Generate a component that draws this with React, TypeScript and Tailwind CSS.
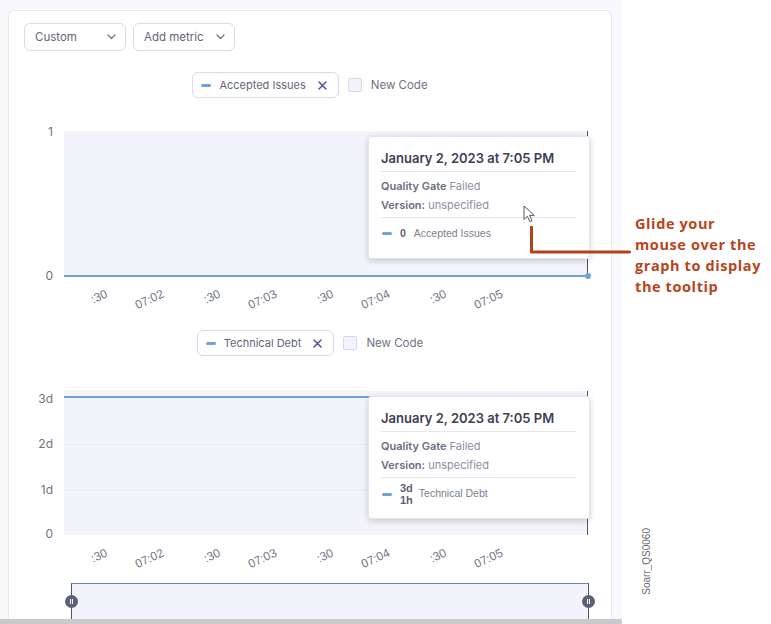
const xTicks = [":30", "07:02", ":30", "07:03", ":30", "07:04", ":30", "07:05"];

const Chevron = () => (
  <svg width="9" height="6" viewBox="0 0 9 6" fill="none">
    <path d="M1 1l3.5 3.5L8 1" stroke="#6b6f82" strokeWidth="1.2" strokeLinecap="round" strokeLinejoin="round" />
  </svg>
);

const Dropdown = ({ label }: { label: string }) => (
  <div className="flex h-[28px] w-[102px] items-center justify-between rounded-md border border-[#d9dbea] bg-white pl-[10px] pr-[9px] text-[11.5px] text-[#62667a]">
    <span className="pt-[2px]">{label}</span>
    <Chevron />
  </div>
);

const Dash = () => <span className="inline-block h-[3px] w-[10px] rounded-full bg-[#6fa2da]" />;

const LegendRow = ({ label }: { label: string }) => (
  <div className="flex h-[26px] items-center justify-center gap-[9px]">
    <div className="flex h-[26px] items-center gap-[8px] rounded-md border border-[#d9dbec] bg-white pl-[8px] pr-[11px] text-[11px] text-[#62667a]">
      <Dash />
      <span className="mr-[4px]">{label}</span>
      <svg width="9" height="9" viewBox="0 0 9 9">
        <path d="M1 1l7 7M8 1L1 8" stroke="#4f53a0" strokeWidth="1.5" strokeLinecap="round" />
      </svg>
    </div>
    <span className="h-[14px] w-[14px] rounded-[2px] border border-[#d5d8ee] bg-[#f2f3fb]" />
    <span className="pt-[2px] text-[11.5px] text-[#6e7284]">New Code</span>
  </div>
);

const Tooltip = ({ children }: { children: React.ReactNode }) => (
  <div className="absolute left-[304px] top-[5px] z-10 h-[123px] w-[222px] rounded-[3px] border border-[#e4e5ec] bg-white px-[12px] pt-[11px] shadow-[0_2px_6px_rgba(0,0,0,0.18)]">
    <div className="mr-px border-b border-[#e6e7ee] pb-[3px] text-[13px] font-semibold leading-[20px] text-[#3d4153]">
      January 2, 2023 at 7:05 PM
    </div>
    <div className="mt-[6px] text-[11px] leading-[16px] text-[#8c90a2]">
      <span className="font-semibold text-[#6a6e82]">Quality Gate</span> Failed
    </div>
    <div className="mt-[3px] border-b border-[#e6e7ee] pb-[4px] text-[11px] leading-[16px] text-[#8c90a2]">
      <span className="font-semibold text-[#6a6e82]">Version:</span> unspecified
    </div>
    {children}
  </div>
);

const XAxis = () => (
  <div className="ml-[41.6px] flex pt-[10px] font-['Liberation_Sans',sans-serif] text-[12px] text-[#72768a]">
    {xTicks.map((t, i) => (
      <div key={i} className="flex h-[14px] w-[56.4px] justify-end leading-[14px]">
        <span className="inline-block origin-right rotate-[-25deg] whitespace-nowrap">{t}</span>
      </div>
    ))}
  </div>
);

const YLabel = ({ top, children }: { top: number; children: string }) => (
  <span className="absolute right-[11px] -translate-y-1/2 text-[12px] leading-[14px] text-[#6f7385]" style={{ top }}>
    {children}
  </span>
);

const App = () => (
  <div className="relative h-[624px] w-[771px] overflow-hidden bg-white font-['Inter',sans-serif]">
    <div className="flex h-[619px] w-[622px] bg-[#f9f9fb] pl-2 pt-[10px]">
      <div className="h-full w-[604px] rounded-t-md border border-b-0 border-[#e8e8f2] bg-white">
        <div className="flex gap-[7px] pl-[15px] pt-3">
          <Dropdown label="Custom" />
          <Dropdown label="Add metric" />
        </div>

        <div className="mt-[21px]">
          <LegendRow label="Accepted Issues" />
        </div>

        {/* Chart 1 */}
        <div className="mt-[33px] flex">
          <div className="relative h-[145px] w-[55px]">
            <YLabel top={1}>1</YLabel>
            <YLabel top={145}>0</YLabel>
          </div>
          <div className="relative h-[145px] w-[524px] bg-[#f3f4fb]">
            <div className="absolute bottom-0 right-0 top-0 w-px bg-[#50566a]" />
            <div className="absolute bottom-[-1px] left-0 right-0 h-[2px] bg-[#6fa3dc]" />
            <div className="absolute bottom-[-3px] right-[-3px] h-[6px] w-[6px] rounded-full bg-[#6fa3dc]" />
            <Tooltip>
              <div className="flex h-[31px] items-center gap-[8px] pl-px font-['Liberation_Sans',sans-serif] text-[10.5px] text-[#7a7e90]">
                <Dash />
                <span className="font-bold text-[#5e6276]">0</span>
                <span>Accepted Issues</span>
              </div>
            </Tooltip>
          </div>
        </div>
        <div className="h-[54px]">
          <XAxis />
        </div>

        <LegendRow label="Technical Debt" />

        {/* Chart 2 */}
        <div className="mt-[35px] flex">
          <div className="relative h-[144px] w-[55px]">
            <YLabel top={8}>3d</YLabel>
            <YLabel top={53}>2d</YLabel>
            <YLabel top={99}>1d</YLabel>
            <YLabel top={143}>0</YLabel>
          </div>
          <div className="relative h-[144px] w-[524px] bg-[#f3f4fb]">
            <div className="absolute left-0 right-0 top-[53px] h-px bg-[#e9e9f0]" />
            <div className="absolute left-0 right-0 top-[99px] h-px bg-[#e9e9f0]" />
            <div className="absolute bottom-0 right-0 top-0 w-px bg-[#50566a]" />
            <div className="absolute left-0 right-0 top-[5px] h-[2px] bg-[#6fa3dc]" />
            <Tooltip>
              <div className="flex h-[32px] items-center gap-[8px] pl-px font-['Liberation_Sans',sans-serif] text-[10.5px] text-[#7a7e90]">
                <Dash />
                <span className="flex flex-col text-[11px] font-bold leading-[12px] text-[#5e6276]">
                  <span>3d</span>
                  <span>1h</span>
                </span>
                <span className="-ml-[2px]">Technical Debt</span>
              </div>
            </Tooltip>
          </div>
        </div>
        <div className="h-[48px]">
          <XAxis />
        </div>

        {/* Range slider */}
        <div className="relative ml-[62px] h-[36px] w-[518px] border-x border-t border-x-[#50566a] border-t-[#6a87b9] bg-[#f3f4fb]">
          {[0, 1].map((i) => (
            <span
              key={i}
              className={`absolute top-[11px] flex h-[13px] w-[13px] items-center justify-center gap-px rounded-full bg-[#5a6078] ${i === 0 ? "left-[-7px]" : "right-[-7px]"}`}
            >
              <span className="h-[5px] w-px bg-white" />
              <span className="h-[5px] w-px bg-white" />
            </span>
          ))}
        </div>
      </div>
    </div>
    <div className="h-[5px] w-[622px] bg-[#c9c9cc]" />

    {/* Cursor */}
    <svg className="absolute left-[523px] top-[205px] z-20" width="13" height="18" viewBox="0 0 13 18">
      <path d="M1 1v13.5l3.4-3.2 2.4 5.4 2.2-1-2.4-5.3h4.6z" fill="#fff" stroke="#55596a" strokeWidth="1" strokeLinejoin="round" />
    </svg>

    {/* Annotation */}
    <svg className="absolute left-[528px] top-[226px] z-20" width="104" height="30" viewBox="0 0 104 30">
      <path d="M3.5 1v25h98" fill="none" stroke="#b3421a" strokeWidth="3" strokeLinejoin="round" strokeLinecap="round" />
    </svg>
    <div className="absolute left-[635px] top-[213px] z-20 font-['Open_Sans',sans-serif] text-[14.5px] font-bold leading-[21px] tracking-[0.6px] text-[#b8441b]">
      Glide your
      <br />
      mouse over the
      <br />
      graph to display
      <br />
      the tooltip
    </div>

    {/* Figure id */}
    <div className="absolute left-[639px] top-[528px] rotate-180 font-['Liberation_Sans',sans-serif] text-[10px] text-[#666a70] [writing-mode:vertical-rl]">
      Soarr_QS0060
    </div>
  </div>
);

export default App;
